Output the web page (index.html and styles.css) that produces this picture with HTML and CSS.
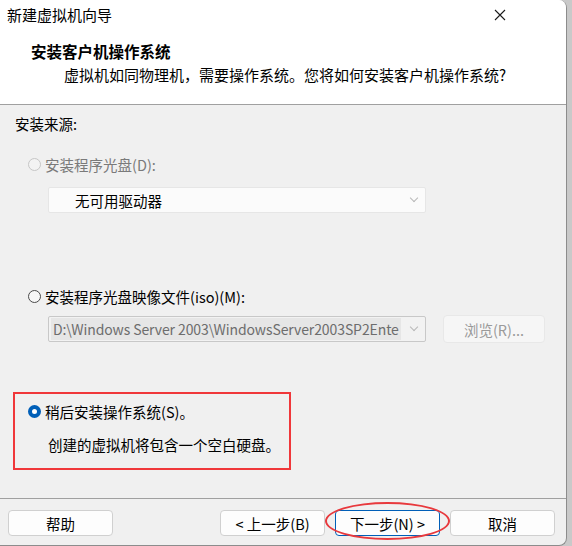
FILE: index.html
```html
<!DOCTYPE html>
<html lang="zh-CN">
<head>
    <meta charset="UTF-8">
    <title>新建虚拟机向导</title>
    <link rel="stylesheet" href="styles.css">
</head>
<body>
    <div class="window">
        <div class="titlebar">
            <span class="title">新建虚拟机向导</span>
            <svg class="close" width="12" height="12" viewBox="0 0 12 12">
                <path d="M1 1 L11 11 M11 1 L1 11" stroke="#1a1a1a" stroke-width="1.1" fill="none"/>
            </svg>
        </div>

        <div class="header">
            <div class="heading">安装客户机操作系统</div>
            <div class="subtitle">虚拟机如同物理机，需要操作系统。您将如何安装客户机操作系统?</div>
        </div>

        <div class="content">
            <div class="source-label">安装来源:</div>

            <div class="option disabled opt-disc">
                <span class="radio"></span>
                <span>安装程序光盘(D):</span>
            </div>
            <div class="combo combo-disc">
                <span class="combo-text">无可用驱动器</span>
                <span class="chevron"></span>
            </div>

            <div class="option opt-iso">
                <span class="radio"></span>
                <span>安装程序光盘映像文件(iso)(M):</span>
            </div>
            <div class="iso-row">
                <div class="combo combo-iso">
                    <span class="combo-text">D:\Windows Server 2003\WindowsServer2003SP2Ente</span>
                    <span class="chevron"></span>
                </div>
                <div class="btn btn-browse">浏览(R)...</div>
            </div>

            <div class="mark-box">
                <div class="option">
                    <span class="radio checked"></span>
                    <span>稍后安装操作系统(S)。</span>
                </div>
                <div class="desc">创建的虚拟机将包含一个空白硬盘。</div>
            </div>
        </div>

        <div class="footer">
            <div class="btn">帮助</div>
            <div class="nav">
                <div class="btn">&lt; 上一步(B)</div>
                <div class="btn default">下一步(N) &gt;</div>
                <div class="btn">取消</div>
            </div>
        </div>

        <!-- 标注红圈 -->
        <div class="mark-ellipse"></div>
    </div>
</body>
</html>
```

FILE: styles.css
```css
/* 页面 */
body {
    margin: 0;
    background: #c9c9c9;
    font-family: "Noto Sans CJK SC", "Noto Sans", sans-serif;
    font-size: 14.5px;
    color: #000;
}

.window {
    position: relative;
    width: 566px;
    height: 545px;
    display: flex;
    flex-direction: column;
    background: #f0f0f0;
    border-right: 1px solid #8c8c8c;
    border-bottom: 1px solid #8c8c8c;
    border-radius: 0 8px 8px 0;
    overflow: hidden;
}

.titlebar {
    height: 30px;
    display: flex;
    align-items: center;
    justify-content: space-between;
    padding: 0 60px 0 7px;
    background: #fff;
}

.title {
    font-size: 15px;
    line-height: 30px;
}

.header {
    height: 75px;
    padding: 10px 0 0 31px;
    box-sizing: border-box;
    background: #fff;
    border-bottom: 1px solid #a0a0a0;
}

.heading {
    font-size: 15.5px;
    font-weight: bold;
    line-height: 22px;
}

.subtitle {
    font-size: 15px;
    line-height: 22px;
    margin: 2px 0 0 33px;
}

.content {
    flex: 1;
}

.source-label {
    height: 38px;
    line-height: 38px;
    padding-left: 15px;
}

.option {
    display: flex;
    align-items: center;
    gap: 4px;
    height: 22px;
    padding-left: 28px;
}

.opt-disc {
    margin-top: 10px;
}

.opt-iso {
    margin-top: 72px;
}

.disabled {
    color: #7a7a7a;
}

.radio {
    width: 11px;
    height: 11px;
    border: 1px solid #4a4a4a;
    border-radius: 50%;
    background: #f7f7f7;
    flex-shrink: 0;
}

.disabled .radio {
    border-color: #c6c6c6;
    background: #f3f3f3;
}

.radio.checked {
    width: 5px;
    height: 5px;
    border: 4px solid #005fb8;
    background: #fff;
}

.combo {
    display: flex;
    align-items: center;
    justify-content: space-between;
    width: 378px;
    height: 26px;
    box-sizing: border-box;
    margin-left: 48px;
    background: #fbfbfb;
    border: 1px solid #e6e6e6;
    border-radius: 2px;
}

.combo-disc {
    margin-top: 12px;
    padding: 0 8px 0 26px;
}

.iso-row {
    display: flex;
    align-items: center;
    height: 28px;
    margin-top: 8px;
}

.combo-iso {
    border-color: #c8c8c8;
    padding: 0 8px 0 2px;
    background: #f2f2f2;
}

.combo-iso .combo-text {
    background: #e6e6e6;
    color: #6d6d6d;
    font-size: 14px;
    letter-spacing: -0.1px;
    padding: 0 2px;
    line-height: 22px;
    white-space: nowrap;
}

.chevron {
    width: 5px;
    height: 5px;
    border-right: 1px solid #b8b8b8;
    border-bottom: 1px solid #b8b8b8;
    transform: rotate(45deg);
    margin-top: -4px;
}

.btn {
    width: 105px;
    height: 26px;
    box-sizing: border-box;
    display: flex;
    align-items: center;
    justify-content: center;
    background: #fdfdfd;
    border: 1px solid #d0d0d0;
    border-radius: 4px;
}

.btn-browse {
    width: 102px;
    height: 28px;
    margin-left: 17px;
    background: #f6f6f6;
    border-color: #e8e8e8;
    color: #9a9a9a;
}

.mark-box {
    width: 278px;
    height: 78px;
    box-sizing: border-box;
    margin: 49px 0 0 13px;
    padding-top: 6px;
    border: 2px solid #f0373a;
}

.mark-box .option {
    padding-left: 13px;
}

.desc {
    margin: 12px 0 0 33px;
    line-height: 22px;
}

.footer {
    height: 47px;
    box-sizing: border-box;
    display: flex;
    justify-content: space-between;
    padding: 11px 11px 0 8px;
    border-top: 1px solid #a0a0a0;
}

.nav {
    display: flex;
    gap: 10px;
}

.btn.default {
    border-color: #005fb8;
}

/* 标注 */
.mark-ellipse {
    position: absolute;
    left: 325px;
    top: 502px;
    width: 125px;
    height: 38px;
    border: 2.5px solid #e8393d;
    border-radius: 50%;
    box-sizing: border-box;
}
```
